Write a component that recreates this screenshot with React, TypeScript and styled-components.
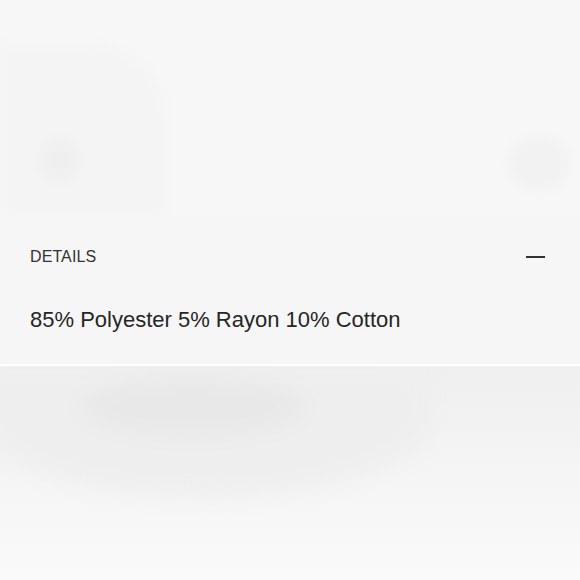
import React from 'react';
import styled, { createGlobalStyle } from 'styled-components';

const GlobalStyle = createGlobalStyle`
  html, body {
    margin: 0;
    padding: 0;
    background: #f7f7f7;
  }
  body {
    font-family: "Liberation Sans", Arial, sans-serif;
    color: #222;
    overflow: hidden;
  }
`;

const Page = styled.div`
  width: 580px;
  height: 580px;
  display: flex;
  flex-direction: column;
  overflow: hidden;
`;

const Hero = styled.div`
  height: 215px;
  display: flex;
  justify-content: space-between;
  align-items: flex-end;
  overflow: hidden;
`;

const GhostPanel = styled.div`
  width: 165px;
  height: 170px;
  background: #f4f4f4;
  border-top-right-radius: 70px;
  filter: blur(5px);
  display: flex;
  align-items: flex-end;
  padding: 0 0 35px 40px;
  box-sizing: border-box;
`;

const GhostBlob = styled.div<{ $w: number; $h: number; $tone: string }>`
  width: ${p => p.$w}px;
  height: ${p => p.$h}px;
  border-radius: 50%;
  background: ${p => p.$tone};
  filter: blur(4px);
`;

const RightGhost = styled.div`
  align-self: flex-start;
  margin: 136px 10px 0 0;
`;

const Details = styled.section`
  padding: 31px 30px 29px;
  border-bottom: 2px solid #ffffff;
  background: #f6f6f6;
  display: flex;
  flex-direction: column;
  gap: 37px;
`;

const Header = styled.div`
  display: flex;
  align-items: center;
  justify-content: space-between;
  height: 22px;
`;

const Title = styled.h3`
  margin: 0;
  font-size: 16px;
  font-weight: 400;
  letter-spacing: 0.1px;
  color: #333;
`;

const Toggle = styled.button`
  border: 0;
  background: none;
  padding: 0;
  margin-right: 5px;
  width: 19px;
  height: 12px;
  display: flex;
  align-items: center;
  cursor: pointer;
`;

const Dash = styled.span`
  display: block;
  width: 19px;
  height: 1.5px;
  background: #333;
`;

const Body = styled.p`
  margin: 0;
  font-size: 22px;
  line-height: 30px;
  color: #262626;
`;

const Lower = styled.div`
  flex: 1;
  background: linear-gradient(#efefef, #f4f4f4 45%, #fafafa);
  overflow: hidden;
  display: flex;
  flex-direction: column;
`;

const LowerGhost = styled.div`
  width: 450px;
  height: 130px;
  margin-left: -20px;
  background: #eeeeee;
  border-radius: 0 30px 50% 50% / 0 30px 60% 60%;
  filter: blur(10px);
  padding: 12px 0 0 100px;
  box-sizing: border-box;
`;

export default function App() {
  return (
    <Page>
      <GlobalStyle />
      <Hero>
        <GhostPanel>
          <GhostBlob $w={40} $h={40} $tone="#efefef" />
        </GhostPanel>
        <RightGhost>
          <GhostBlob $w={62} $h={55} $tone="#f2f2f2" />
        </RightGhost>
      </Hero>
      <Details>
        <Header>
          <Title>DETAILS</Title>
          <Toggle aria-label="Collapse">
            <Dash />
          </Toggle>
        </Header>
        <Body>85% Polyester 5% Rayon 10% Cotton</Body>
      </Details>
      <Lower>
        <LowerGhost>
          <GhostBlob $w={225} $h={58} $tone="#e8e8e8" />
        </LowerGhost>
      </Lower>
    </Page>
  );
}
